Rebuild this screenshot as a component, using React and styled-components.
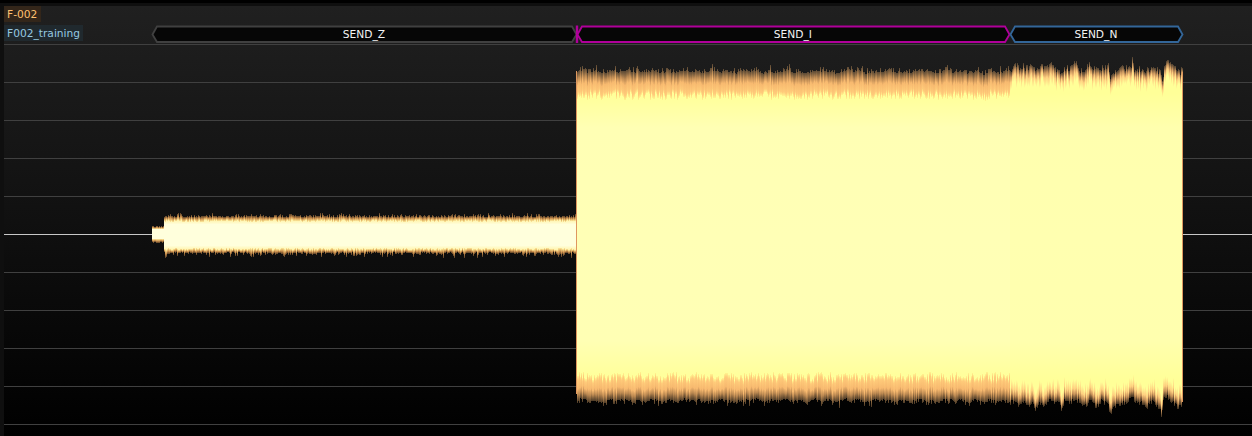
import React from "react";
import styled, { createGlobalStyle } from "styled-components";

const GlobalStyle = createGlobalStyle`
  html, body { margin: 0; background: #000; overflow: hidden; }
`;

const Window = styled.div`
  display: flex;
  flex-direction: column;
  box-sizing: border-box;
  width: 1252px;
  height: 436px;
  border-top: 3px solid #000;
  padding: 3px 0 0 4px;
  background: #0f0f0f;
  font: 10.67px/18px "DejaVu Sans", sans-serif;
  overflow: hidden;
`;

const Plot = styled.div`
  position: relative;
  flex: 1;
  display: flex;
  flex-direction: column;
  background: linear-gradient(#202020, #000);
`;

const Graticule = styled.div`
  position: absolute;
  inset: 0;
  padding-top: 38px;
`;

const GridLine = styled.div`
  height: 1px;
  margin-bottom: 37px;
  background: ${(p) => (p.$axis ? "#c8c8c8" : "#404040")};
`;

const Row = styled.div`
  position: relative;
  display: flex;
  height: 16px;
  margin-bottom: 3px;
`;

const Tag = styled.div`
  box-sizing: border-box;
  width: ${(p) => p.$width}px;
  height: 16px;
  padding-left: 3px;
  color: ${(p) => p.$color};
  background: ${(p) => p.$background};
  white-space: nowrap;
`;

const Track = styled.div`
  display: flex;
  margin-left: 69px;
  height: 18px;
`;

const Packet = styled.div`
  position: relative;
  width: ${(p) => p.$width}px;
  height: 18px;
  line-height: 20px;
  color: #f4f4f4;
  text-align: center;
`;

const Outline = styled.svg`
  position: absolute;
  inset: 0;
  overflow: visible;
`;

const PacketLabel = styled.span`
  position: relative;
  left: -0.6px;
`;

const Trace = styled.svg`
  position: absolute;
  left: -4px;
  top: -6px;
`;

const packets = [
  { label: "SEND_Z", width: 425, color: "#404040" },
  { label: "SEND_I", width: 433, color: "#b0009a", burst: true },
  { label: "SEND_N", width: 173, color: "#336699" },
];

function Hexagon({ label, width, color, burst }) {
  return (
    <Packet $width={width}>
      <Outline width={width} height="18">
        <path
          d={`M0.5 9.5L5 1.5H${width - 5}L${width - 0.5} 9.5L${width - 5} 17H5Z`}
          fill="#060606"
          stroke={color}
          strokeWidth="1.8"
        />
        {burst && <path d="M0 .5V18" stroke={color} strokeWidth="2.4" />}
      </Outline>
      <PacketLabel>{label}</PacketLabel>
    </Packet>
  );
}

let seed = 7351;
const random = () => {
  seed = (seed * 1664525 + 1013904223) >>> 0;
  return seed / 4294967296;
};
const spike = (size) => -Math.log(1 - random() * 0.98) * size;

// Envelope of the SEND_N burst as [column, level] pairs.
const upper = [
  [1010, 69], [1012, 63.5], [1017, 64], [1019, 69], [1023, 61.5], [1025, 67], [1031, 64], [1033, 66], [1037, 69],
  [1040, 64], [1047, 65], [1050, 62], [1055, 66], [1060, 69], [1064, 67], [1070, 65], [1075, 59], [1077, 66],
  [1085, 71], [1088, 62], [1093, 66], [1100, 68], [1108, 63], [1110, 74], [1113, 71], [1118, 67], [1125, 66],
  [1131, 66], [1132, 58], [1134, 67], [1143, 67], [1148, 69], [1153, 63], [1157, 68], [1161, 72], [1162, 79],
  [1164, 67], [1166, 60], [1172, 63], [1177, 69], [1180, 70], [1181, 65], [1183, 72],
];
const lower = [
  [1010, 405], [1017, 403], [1018, 411], [1020, 406], [1025, 403], [1030, 407], [1032, 403], [1035, 412], [1038, 405],
  [1044, 407], [1050, 403], [1055, 407], [1058, 403], [1061, 411], [1064, 404], [1072, 403], [1075, 401],
  [1084, 407], [1091, 404], [1096, 408], [1102, 403], [1108, 407], [1110, 416], [1113, 408], [1122, 406],
  [1132, 400], [1137, 405], [1147, 408], [1152, 403], [1158, 408], [1160, 409], [1161, 418], [1163, 403], [1165, 398],
  [1172, 403], [1178, 411], [1181, 408], [1183, 398],
];
const levelAt = (points, x) => {
  const i = Math.max(1, points.findIndex(([px]) => px >= x));
  const [x0, y0] = points[i - 1];
  const [x1, y1] = points[i];
  return y0 + ((y1 - y0) * (x - x0)) / (x1 - x0);
};

function Columns() {
  const out = [];
  const add = (x, top, bottom, coreTop, coreBottom, kind) => {
    const t = Math.round(top);
    const b = Math.round(bottom);
    out.push(
      <g key={x}>
        <rect x={x} y={t} width="1" height={coreTop - t} fill={`url(#${kind}Top)`} />
        <rect x={x} y={coreTop} width="1" height={coreBottom - coreTop} fill={`url(#${kind}Core)`} />
        <rect x={x} y={coreBottom} width="1" height={b - coreBottom} fill={`url(#${kind}Bottom)`} />
      </g>
    );
  };
  for (let x = 152; x < 164; x++) add(x, 225.5 + random() * 2, 241.5 + random() * 2, 229, 239, "z");
  for (let x = 164; x < 577; x++) {
    add(x, 217 - spike(1.2), 252.3 + spike(1.5), Math.round(220 + random() * 2), Math.round(248 + random() * 2), "z");
  }
  for (let x = 577; x < 1010; x++) {
    const dip = x > 978 && x < 989 ? 3 - Math.abs(x - 984) * 0.6 : 0;
    const drift = Math.sin(x * 0.43) * 0.8 + Math.sin(x * 0.19) * 0.8;
    add(
      x,
      72 + dip + drift - spike(2) + random(),
      400 + dip + drift + spike(2) - random(),
      Math.round(92 + dip + random() * 8),
      Math.round(372 + random() * 9),
      "i"
    );
  }
  for (let x = 1010; x < 1183; x++) {
    const t = levelAt(upper, x) + random() * 7 - 1.5;
    const b = levelAt(lower, x) - random() * 6 + 1;
    const topCore = 73 + (t - 58) * 0.75 + random() * 9;
    const bottomCore = 375 + (b - 398) + random() * 8;
    add(x, t, b, Math.round(topCore), Math.round(bottomCore), "n");
  }
  return out;
}

function Edge({ id, stops }) {
  const ramp = (list) => list.map(([o, c, a = 1]) => <stop key={o} offset={o} stopColor={c} stopOpacity={a} />);
  return (
    <>
      <linearGradient id={`${id}Top`} x1="0" y1="0" x2="0" y2="1">{ramp(stops)}</linearGradient>
      <linearGradient id={`${id}Bottom`} x1="0" y1="1" x2="0" y2="0">{ramp(stops)}</linearGradient>
    </>
  );
}

function Waveform() {
  const columns = React.useMemo(() => Columns(), []);
  return (
    <Trace width="1252" height="436" shapeRendering="crispEdges">
      <defs>
        <Edge id="z" stops={[[0, "#a87440", 0.5], [0.5, "#e5a459", 0.9], [1, "#ffed9c"]]} />
        <Edge id="i" stops={[[0, "#a98052", 0.45], [0.28, "#cf975a", 0.9], [0.5, "#f7b96f"], [0.85, "#ffcb7a"], [1, "#fff490"]]} />
        <Edge id="n" stops={[[0, "#a98052", 0.35], [0.32, "#e0a465", 0.88], [0.58, "#ffd080"], [1, "#ffff99"]]} />
        <linearGradient id="zCore" gradientUnits="userSpaceOnUse" x1="0" x2="0" y1="220" y2="250">
          <stop offset="0" stopColor="#fff3a9" /><stop offset=".15" stopColor="#ffffdc" />
          <stop offset=".85" stopColor="#ffffdc" /><stop offset="1" stopColor="#fff3a9" />
        </linearGradient>
        {["i", "n"].map((id) => (
          <linearGradient key={id} id={`${id}Core`} gradientUnits="userSpaceOnUse" x1="0" x2="0" y1="93" y2="381">
            <stop offset="0" stopColor="#ffff98" />
            <stop offset=".12" stopColor={id === "i" ? "#ffffb4" : "#ffffae"} />
            <stop offset=".5" stopColor={id === "i" ? "#ffffb6" : "#ffffb0"} />
            <stop offset=".86" stopColor={id === "i" ? "#ffffb4" : "#ffffae"} />
            <stop offset="1" stopColor="#ffff98" />
          </linearGradient>
        ))}
      </defs>
      {columns}
      <path d="M576.5 71V394M1182.5 72V402" stroke="#df975e" />
    </Trace>
  );
}

export default function App() {
  return (
    <>
      <GlobalStyle />
      <Window>
        <Plot>
          <Graticule>
            {Array.from({ length: 11 }, (_, i) => <GridLine key={i} $axis={i === 5} />)}
          </Graticule>
          <Waveform />
          <Row><Tag $width={37} $color="#ffc070" $background="#33261a">F-002</Tag></Row>
          <Row>
            <Tag $width={79} $color="#96c8e0" $background="#20292e">F002_training</Tag>
            <Track>{packets.map((p) => <Hexagon key={p.label} {...p} />)}</Track>
          </Row>
        </Plot>
      </Window>
    </>
  );
}
